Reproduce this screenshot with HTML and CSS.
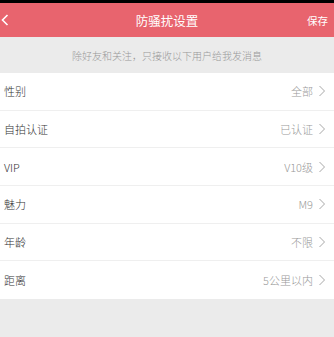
FILE: index.html
```html
<!DOCTYPE html>
<html lang="zh">
<head>
<meta charset="utf-8">
<link rel="stylesheet" href="styles.css">
</head>
<body>
<div class="status"></div>
<header class="bar">
  <svg class="back" width="8" height="12" viewBox="0 0 8 12"><path d="M6.5 1 L1.5 6 L6.5 11" fill="none" stroke="#fff" stroke-width="1.6"/></svg>
  <div class="title">防骚扰设置</div>
  <div class="save">保存</div>
</header>
<div class="tip">除好友和关注，只接收以下用户给我发消息</div>
<ul class="list">
  <li class="row"><span class="label">性别</span><span class="value">全部</span><svg class="chev" width="8" height="12" viewBox="0 0 8 12"><path d="M1.5 1 L6.5 6 L1.5 11" fill="none" stroke="#a8a8a8" stroke-width="1"/></svg></li>
  <li class="row"><span class="label">自拍认证</span><span class="value">已认证</span><svg class="chev" width="8" height="12" viewBox="0 0 8 12"><path d="M1.5 1 L6.5 6 L1.5 11" fill="none" stroke="#a8a8a8" stroke-width="1"/></svg></li>
  <li class="row"><span class="label">VIP</span><span class="value">V10级</span><svg class="chev" width="8" height="12" viewBox="0 0 8 12"><path d="M1.5 1 L6.5 6 L1.5 11" fill="none" stroke="#a8a8a8" stroke-width="1"/></svg></li>
  <li class="row"><span class="label">魅力</span><span class="value">M9</span><svg class="chev" width="8" height="12" viewBox="0 0 8 12"><path d="M1.5 1 L6.5 6 L1.5 11" fill="none" stroke="#a8a8a8" stroke-width="1"/></svg></li>
  <li class="row"><span class="label">年龄</span><span class="value">不限</span><svg class="chev" width="8" height="12" viewBox="0 0 8 12"><path d="M1.5 1 L6.5 6 L1.5 11" fill="none" stroke="#a8a8a8" stroke-width="1"/></svg></li>
  <li class="row last"><span class="label">距离</span><span class="value">5公里以内</span><svg class="chev" width="8" height="12" viewBox="0 0 8 12"><path d="M1.5 1 L6.5 6 L1.5 11" fill="none" stroke="#a8a8a8" stroke-width="1"/></svg></li>
</ul>
</body>
</html>
```

FILE: styles.css
```css
html, body {
  margin: 0;
  padding: 0;
  background: #ebebeb;
  font-family: "Noto Sans CJK SC", "Liberation Sans", sans-serif;
  font-weight: 300;
}
.status {
  height: 3px;
  background: #000;
}
.bar {
  height: 34px;
  background: #e8646e;
  display: flex;
  align-items: center;
  justify-content: space-between;
  padding: 0 6px 0 1px;
  position: relative;
  color: #fff;
}
.back {
  display: block;
}
.title {
  position: absolute;
  left: 0;
  right: 0;
  text-align: center;
  font-size: 12.5px;
  font-weight: 400;
  pointer-events: none;
}
.save {
  font-size: 10.5px;
  font-weight: 400;
}
.tip {
  height: 36px;
  display: flex;
  align-items: center;
  justify-content: center;
  font-size: 10px;
  color: #999;
}
.list {
  list-style: none;
  margin: 0;
  padding: 0;
  background: #fff;
}
.row {
  height: 37.67px;
  box-sizing: border-box;
  border-bottom: 1px solid #efefef;
  display: flex;
  align-items: center;
  padding: 0 8px 0 4px;
  font-size: 11px;
}
.row.last {
  border-bottom: none;
}
.label {
  flex: 1;
  color: #333;
}
.value {
  color: #999;
  margin-right: 5px;
}
.chev {
  display: block;
}
```
